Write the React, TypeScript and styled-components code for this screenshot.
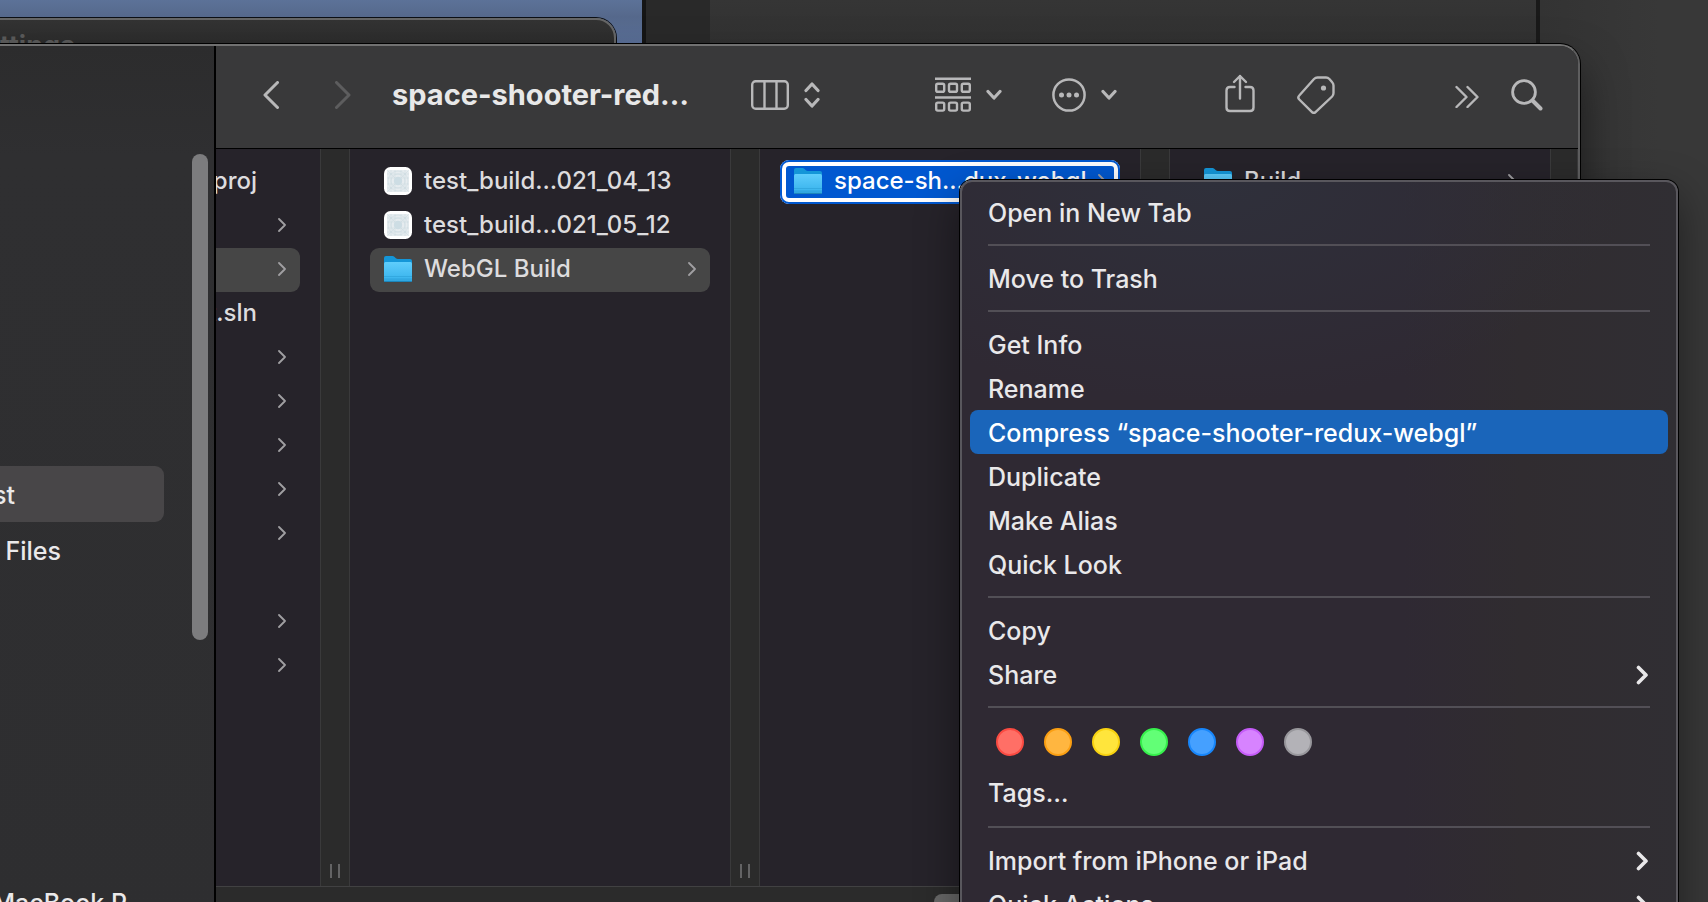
import React from "react";
import styled, { createGlobalStyle } from "styled-components";

const GlobalStyle = createGlobalStyle`
  * { box-sizing: border-box; }
  html, body { margin: 0; height: 100%; background: #363636; }
  body { font-family: Inter, "Liberation Sans", sans-serif; overflow: hidden; }
  ul { list-style: none; margin: 0; padding: 0; }
  button {
    appearance: none; border: 0; padding: 0; margin: 0;
    background: none; color: inherit; font: inherit; text-align: left;
  }
  svg { display: block; flex: none; }
`;

/* ---------- desktop behind the windows ---------- */

const Desktop = styled.main`
  position: relative;
  height: 100vh;
  overflow: hidden;
  display: flex;
  color: #e4e3e5;
  background: #363636;
`;

const ScenePane = styled.div`
  flex: 0 0 642px;
  background: linear-gradient(#5c7298 0, #56698c 16px, #5a6f98 44px);
`;

const EditorGutter = styled.div`
  flex: 0 0 68px;
  border-left: 4px solid #151515;
  background: #292929;
`;

const EditorPane = styled.div`
  flex: 1;
  background: linear-gradient(#353535, #313131 44px);
`;

const InspectorPane = styled.div`
  flex: 0 0 172px;
  border-left: 4px solid #191919;
  background: linear-gradient(90deg, #333333, #383838 120px);
`;

const SettingsWindow = styled.section`
  position: absolute;
  left: -20px;
  top: 18px;
  width: 636px;
  height: 200px;
  padding: 10px 0 0 18px;
  border: 2px solid #666666;
  border-radius: 20px;
  background: linear-gradient(#333333, #2b2b2b 26px);
  box-shadow: 0 0 0 1px #0c0f14;
`;

const SettingsTitle = styled.h2`
  margin: 0;
  font-size: 27px;
  line-height: 32px;
  font-weight: 700;
  color: #5a5a5a;
`;

/* ---------- file browser window ---------- */

const FinderWindow = styled.section`
  position: absolute;
  left: 0;
  right: 128px;
  top: 44px;
  bottom: -40px;
  display: flex;
  overflow: hidden;
  border-top: 2px solid #717171;
  border-right: 2px solid #5e5e5f;
  border-top-right-radius: 20px;
  background: #2b2b2b;
  box-shadow: 0 0 0 1px #000000, 0 24px 44px rgba(0, 0, 0, 0.5);
`;

const Sidebar = styled.nav`
  flex: 0 0 216px;
  display: flex;
  align-items: flex-start;
  border-right: 2px solid #000000;
  background: linear-gradient(#2c2c2d, #2f2f31 110px, #2e2e30);
`;

const SidebarList = styled.ul`
  flex: 1;
  padding-top: 420px;
`;

const SidebarItem = styled.button<{ $selected?: boolean; $end: number }>`
  display: flex;
  justify-content: flex-end;
  width: 164px;
  height: 56px;
  padding: 1px ${(p) => 164 - p.$end}px 0 0;
  border-radius: 0 9px 9px 0;
  font-size: 25px;
  line-height: 56px;
  font-weight: 500;
  white-space: nowrap;
  color: #eae9ea;
  background: ${(p) => (p.$selected ? "#484648" : "transparent")};
`;

const SidebarSection = styled.li`
  padding-top: 296px;
`;

const SidebarThumb = styled.div`
  width: 16px;
  height: 486px;
  margin: 108px 6px 0 0;
  border-radius: 8px;
  background: #7c7c7e;
`;

const Browser = styled.div`
  flex: 1;
  min-width: 0;
  display: flex;
  flex-direction: column;
`;

const Toolbar = styled.header`
  flex: 0 0 103px;
  display: flex;
  align-items: center;
  padding: 0 35px 4px 47px;
  border-bottom: 1px solid #000000;
  background: #39393a;
  color: #b8b8b9;
`;

const ToolGroup = styled.div<{ $before?: number; $gap?: number }>`
  display: flex;
  align-items: center;
  gap: ${(p) => p.$gap ?? 16}px;
  margin-left: ${(p) => p.$before ?? 0}px;
`;

const ToolButton = styled.button<{ $before?: number }>`
  display: flex;
  align-items: center;
  gap: 15px;
  margin-left: ${(p) => p.$before ?? 0}px;
  &:disabled { color: #5d5d5e; }
`;

const Title = styled.h1`
  flex: 1;
  margin: 0 0 0 41px;
  font-size: 29px;
  line-height: 40px;
  font-weight: 700;
  white-space: nowrap;
  color: #e8e8e8;
`;

const Columns = styled.div`
  flex: 0 0 737px;
  display: flex;
  min-width: 0;
`;

const Column = styled.ul<{ $width?: number; $first?: boolean }>`
  flex: ${(p) => (p.$width ? `0 0 ${p.$width}px` : "1")};
  min-width: 0;
  padding: ${(p) => (p.$first ? "11px 20px 0 0" : "11px 20px 0")};
  overflow: hidden;
  background: #26232a;
`;

const Gutter = styled.div<{ $width?: number }>`
  flex: 0 0 ${(p) => p.$width ?? 30}px;
  display: flex;
  justify-content: center;
  align-items: flex-end;
  gap: 6px;
  padding-bottom: 8px;
  border: 1px solid #3a3a3b;
  border-width: 0 1px;
  background: #2b2b2b;
`;

const Grip = styled.i`
  width: 2px;
  height: 14px;
  background: #636364;
`;

const FileRow = styled.button<{ $state?: "open" | "target"; $first?: boolean }>`
  display: flex;
  align-items: center;
  gap: 12px;
  width: 100%;
  height: 44px;
  padding: ${(p) => (p.$first ? "0 14px 2px 0" : "0 14px 2px")};
  border-radius: ${(p) => (p.$first ? "0 9px 9px 0" : "9px")};
  color: ${(p) => (p.$state === "target" ? "#ffffff" : "#dddcde")};
  background: ${(p) =>
    p.$state === "open" ? "#464646" : p.$state === "target" ? "#0058d0" : "transparent"};
  box-shadow: ${(p) =>
    p.$state === "target" ? "inset 0 0 0 2px #0058d0, inset 0 0 0 6px #ffffff" : "none"};
`;

const FileName = styled.span<{ $cut?: boolean }>`
  display: flex;
  justify-content: ${(p) => (p.$cut ? "flex-end" : "flex-start")};
  flex: ${(p) => (p.$cut ? "0 0 41px" : "1")};
  min-width: 0;
  width: ${(p) => (p.$cut ? "41px" : "auto")};
  font-size: 24px;
  font-weight: 500;
  line-height: 42px;
  white-space: nowrap;
`;

const RowArrow = styled.span`
  margin-left: auto;
  color: #a09fa2;
`;

const PathBar = styled.footer`
  flex: 1;
  padding: 7px 0 0 718px;
  border-top: 1px solid #414142;
  background: #2b2b2b;
`;

const ColumnThumb = styled.div`
  width: 240px;
  height: 30px;
  border-radius: 8px;
  background: #686868;
`;

/* ---------- context menu ---------- */

const Menu = styled.ul`
  && {
    position: absolute;
    left: 960px;
    top: 180px;
    width: 718px;
    padding: 8px 8px 40px;
  }
  border: 2px solid #59575d;
  border-radius: 12px;
  background:
    radial-gradient(420px 220px at 250px 0, #2f303b, rgba(47, 48, 59, 0)),
    linear-gradient(90deg, #2f2933 0, #2f2933 440px, #302c30 560px, #302e33 100%);
  box-shadow: 0 0 0 1px #000000, 0 16px 44px rgba(0, 0, 0, 0.45);
`;

const MenuItem = styled.button<{ $active?: boolean }>`
  display: flex;
  align-items: center;
  justify-content: space-between;
  width: 100%;
  height: 44px;
  padding: 2px 20px 0 18px;
  border-radius: 8px;
  font-size: 25px;
  font-weight: 500;
  line-height: 42px;
  white-space: nowrap;
  color: ${(p) => (p.$active ? "#ffffff" : "#e9e8ea")};
  background: ${(p) => (p.$active ? "#1a65ba" : "transparent")};
`;

const Separator = styled.li`
  height: 2px;
  margin: 10px 18px;
  background: #524f56;
`;

const TagRow = styled.li`
  display: flex;
  gap: 20px;
  padding: 10px 26px 14px;
`;

const TagDot = styled.button<{ $fill: string; $ring: string }>`
  width: 28px;
  height: 28px;
  border: 2px solid ${(p) => p.$ring};
  border-radius: 50%;
  background: ${(p) => p.$fill};
`;

const TagsLabel = styled.li`
  padding-bottom: 2px;
`;

/* ---------- icons ---------- */

type StrokeIconProps = { w: number; h: number; d: string; s?: number };

const StrokeIcon = ({ w, h, d, s = 3 }: StrokeIconProps) => (
  <svg
    width={w}
    height={h}
    viewBox={`0 0 ${w} ${h}`}
    fill="none"
    stroke="currentColor"
    strokeWidth={s}
    strokeLinecap="round"
    strokeLinejoin="round"
    aria-hidden
  >
    <path d={d} />
  </svg>
);

const DownChevron = () => <StrokeIcon w={16} h={12} s={3.2} d="M2 2.500 8 9l6-6.500" />;

const ColumnsIcon = () => (
  <svg width="38" height="30" viewBox="0 0 38 30" fill="none" stroke="currentColor" strokeWidth="2.4" aria-hidden>
    <rect x="1.2" y="1.2" width="35.6" height="27.6" rx="3.5" />
    <path d="M13.500 1v28M25.500 1v28" />
  </svg>
);

const GroupIcon = () => (
  <svg width="36" height="36" viewBox="0 0 36 36" fill="none" stroke="currentColor" strokeWidth="2.4" aria-hidden>
    <path d="M0 1.800h36M0 20.500h36" />
    {[6.8, 25.6].map((y) =>
      [1.2, 14, 26.8].map((x) => <rect key={`${x}-${y}`} x={x} y={y} width="8" height="8" rx="1.6" />)
    )}
  </svg>
);

const MoreIcon = () => (
  <svg width="34" height="34" viewBox="0 0 34 34" aria-hidden>
    <circle cx="17" cy="17" r="15.6" fill="none" stroke="currentColor" strokeWidth="2.5" />
    {[9.5, 17, 24.5].map((x) => (
      <circle key={x} cx={x} cy="17" r="2.5" fill="currentColor" />
    ))}
  </svg>
);

const ShareIcon = () => (
  <StrokeIcon w={30} h={42} s={2.4} d="M15 24.500V2M9 8 15 2l6 6M9.500 13H5q-3.500 0-3.500 3.500v17Q1.500 37 5 37h20q3.500 0 3.500-3.500v-17Q28.500 13 25 13h-4.500" />
);

const TagIcon = () => (
  <svg width="38" height="38" viewBox="0 0 38 38" aria-hidden>
    <path
      d="M20.500 1.500H29q2 0 3.400 1.500l2.800 3.200q1.300 1.400 1.300 3.300v7.500q0 2-1.400 3.500L18.800 35.800q-2 2-4 0L2.300 23.500q-2-2 0-4L17 3q1.500-1.500 3.500-1.500z"
      fill="none"
      stroke="currentColor"
      strokeWidth="2.400"
    />
    <circle cx="26.500" cy="12" r="2.600" fill="currentColor" />
  </svg>
);

const SearchIcon = () => (
  <svg width="32" height="32" viewBox="0 0 32 32" fill="none" stroke="currentColor" strokeLinecap="round" aria-hidden>
    <circle cx="13" cy="13" r="11.400" strokeWidth="2.800" />
    <path d="M21.500 21.500 29.500 29.500" strokeWidth="4" />
  </svg>
);

const FolderIcon = () => (
  <svg width="28" height="28" viewBox="0 0 28 28" aria-hidden>
    <defs>
      <linearGradient id="folderFront" x1="0" y1="0" x2="0" y2="1">
        <stop offset="0" stopColor="#5fcdfc" />
        <stop offset="0.800" stopColor="#3db6ee" />
        <stop offset="1" stopColor="#2a9fd8" />
      </linearGradient>
    </defs>
    <path d="M0 3q0-2 2-2h6.500q1 0 1.800.8l1.600 1.400q.8.8 2 .8H26q2 0 2 2v5H0z" fill="#1496d8" />
    <path d="M0 8.500Q0 7 1.500 7h25Q28 7 28 8.500v17q0 1.500-1.500 1.500h-25Q0 27 0 25.500z" fill="url(#folderFront)" />
    <path d="M0 21.500h28M0 24h28" stroke="#2a9dd6" strokeWidth="0.800" opacity="0.700" />
    <path d="M.5 26.500h27" stroke="#1c86bb" strokeWidth="1" />
  </svg>
);

const AppIcon = () => (
  <svg width="28" height="28" viewBox="0 0 28 28" fill="none" aria-hidden>
    <rect width="28" height="28" rx="6.500" fill="#ffffff" />
    <rect x="3" y="3" width="22" height="22" rx="2" fill="#e6ecef" />
    <g stroke="#c9d8de" strokeWidth="0.500">
      <path d="M3 7h22M3 11h22M3 17h22M3 21h22M7 3v22M11 3v22M17 3v22M21 3v22M3 3l22 22M25 3 3 25" />
      <circle cx="14" cy="14" r="10" />
      <circle cx="14" cy="14" r="7" />
    </g>
    <circle cx="14" cy="14" r="4.200" fill="#cddde4" />
  </svg>
);

const Disclosure = () => (
  <RowArrow>
    <StrokeIcon w={8} h={14} s={1.8} d="M1 1l6 6-6 6" />
  </RowArrow>
);

/* ---------- data ---------- */

type Entry = { name?: string; arrow?: boolean; open?: boolean };

const projectEntries: Entry[] = [
  { name: "proj" },
  { arrow: true },
  { arrow: true, open: true },
  { name: "t.sln" },
  { arrow: true },
  { arrow: true },
  { arrow: true },
  { arrow: true },
  { arrow: true },
  {},
  { arrow: true },
  { arrow: true },
];

const tags = [
  { label: "Red", fill: "#ff6f66", ring: "#fb4b42" },
  { label: "Orange", fill: "#ffb640", ring: "#fb9f12" },
  { label: "Yellow", fill: "#ffe53c", ring: "#f8d210" },
  { label: "Green", fill: "#62ff76", ring: "#36f04c" },
  { label: "Blue", fill: "#45a0ff", ring: "#1786fb" },
  { label: "Purple", fill: "#d783ff", ring: "#c55cf8" },
  { label: "Gray", fill: "#b3b2b7", ring: "#98979c" },
];

type ItemProps = { children: React.ReactNode; active?: boolean; submenu?: boolean };

const Item = ({ children, active, submenu }: ItemProps) => (
  <li>
    <MenuItem $active={active}>
      {children}
      {submenu && <StrokeIcon w={12} h={20} s={3.6} d="M2.500 2.500l7.500 7.500-7.500 7.500" />}
    </MenuItem>
  </li>
);

export default function App() {
  return (
    <Desktop>
      <GlobalStyle />
      <ScenePane />
      <EditorGutter />
      <EditorPane />
      <InspectorPane />

      <SettingsWindow>
        <SettingsTitle>ttings</SettingsTitle>
      </SettingsWindow>

      <FinderWindow>
        <Sidebar>
          <SidebarList>
            <li><SidebarItem $selected $end={15}>st</SidebarItem></li>
            <li><SidebarItem $end={61}>Files</SidebarItem></li>
            <SidebarSection><SidebarItem $end={127}>MacBook P</SidebarItem></SidebarSection>
          </SidebarList>
          <SidebarThumb />
        </Sidebar>

        <Browser>
          <Toolbar>
            <ToolGroup $gap={56}>
              <ToolButton aria-label="Back"><StrokeIcon w={16} h={28} d="M14.500 1.500 2 14l12.500 12.500" /></ToolButton>
              <ToolButton aria-label="Forward" disabled><StrokeIcon w={16} h={28} d="M1.500 1.500 14 14 1.500 26.500" /></ToolButton>
            </ToolGroup>
            <Title>space-shooter-red…</Title>
            <ToolButton aria-label="View as columns">
              <ColumnsIcon />
              <StrokeIcon w={16} h={28} s={3.2} d="M2 9.500 8 3l6 6.500M2 18.500 8 25l6-6.500" />
            </ToolButton>
            <ToolButton aria-label="Group items" $before={115}><GroupIcon /><DownChevron /></ToolButton>
            <ToolButton aria-label="More actions" $before={50}><MoreIcon /><DownChevron /></ToolButton>
            <ToolGroup $before={108} $gap={42}>
              <ToolButton aria-label="Share"><ShareIcon /></ToolButton>
              <ToolButton aria-label="Edit tags"><TagIcon /></ToolButton>
            </ToolGroup>
            <ToolGroup $before={120} $gap={32}>
              <ToolButton aria-label="More toolbar items"><StrokeIcon w={24} h={26} s={2.4} d="M1.500 5 11.500 15l-10 10M12.500 5l10 10-10 10" /></ToolButton>
              <ToolButton aria-label="Search"><SearchIcon /></ToolButton>
            </ToolGroup>
          </Toolbar>

          <Columns>
            <Column $width={104} $first>
              {projectEntries.map((entry, i) => (
                <li key={i}>
                  <FileRow $first $state={entry.open ? "open" : undefined} aria-label={entry.name ?? "Folder"}>
                    {entry.name && <FileName $cut>{entry.name}</FileName>}
                    {entry.arrow && <Disclosure />}
                  </FileRow>
                </li>
              ))}
            </Column>
            <Gutter><Grip /><Grip /></Gutter>
            <Column $width={380}>
              <li><FileRow><AppIcon /><FileName>test_build…021_04_13</FileName></FileRow></li>
              <li><FileRow><AppIcon /><FileName>test_build…021_05_12</FileName></FileRow></li>
              <li><FileRow $state="open"><FolderIcon /><FileName>WebGL Build</FileName><Disclosure /></FileRow></li>
            </Column>
            <Gutter><Grip /><Grip /></Gutter>
            <Column $width={380}>
              <li><FileRow $state="target"><FolderIcon /><FileName>space-sh…dux-webgl</FileName><Disclosure /></FileRow></li>
            </Column>
            <Gutter><Grip /><Grip /></Gutter>
            <Column>
              <li><FileRow><FolderIcon /><FileName>Build</FileName><Disclosure /></FileRow></li>
            </Column>
            <Gutter $width={28} />
          </Columns>
          <PathBar><ColumnThumb /></PathBar>
        </Browser>
      </FinderWindow>

      <Menu>
        <Item>Open in New Tab</Item>
        <Separator />
        <Item>Move to Trash</Item>
        <Separator />
        <Item>Get Info</Item>
        <Item>Rename</Item>
        <Item active>Compress “space-shooter-redux-webgl”</Item>
        <Item>Duplicate</Item>
        <Item>Make Alias</Item>
        <Item>Quick Look</Item>
        <Separator />
        <Item>Copy</Item>
        <Item submenu>Share</Item>
        <Separator />
        <TagRow>
          {tags.map((t) => (
            <TagDot key={t.label} $fill={t.fill} $ring={t.ring} aria-label={t.label} />
          ))}
        </TagRow>
        <TagsLabel><MenuItem>Tags…</MenuItem></TagsLabel>
        <Separator />
        <Item submenu>Import from iPhone or iPad</Item>
        <Item submenu>Quick Actions</Item>
      </Menu>
    </Desktop>
  );
}
